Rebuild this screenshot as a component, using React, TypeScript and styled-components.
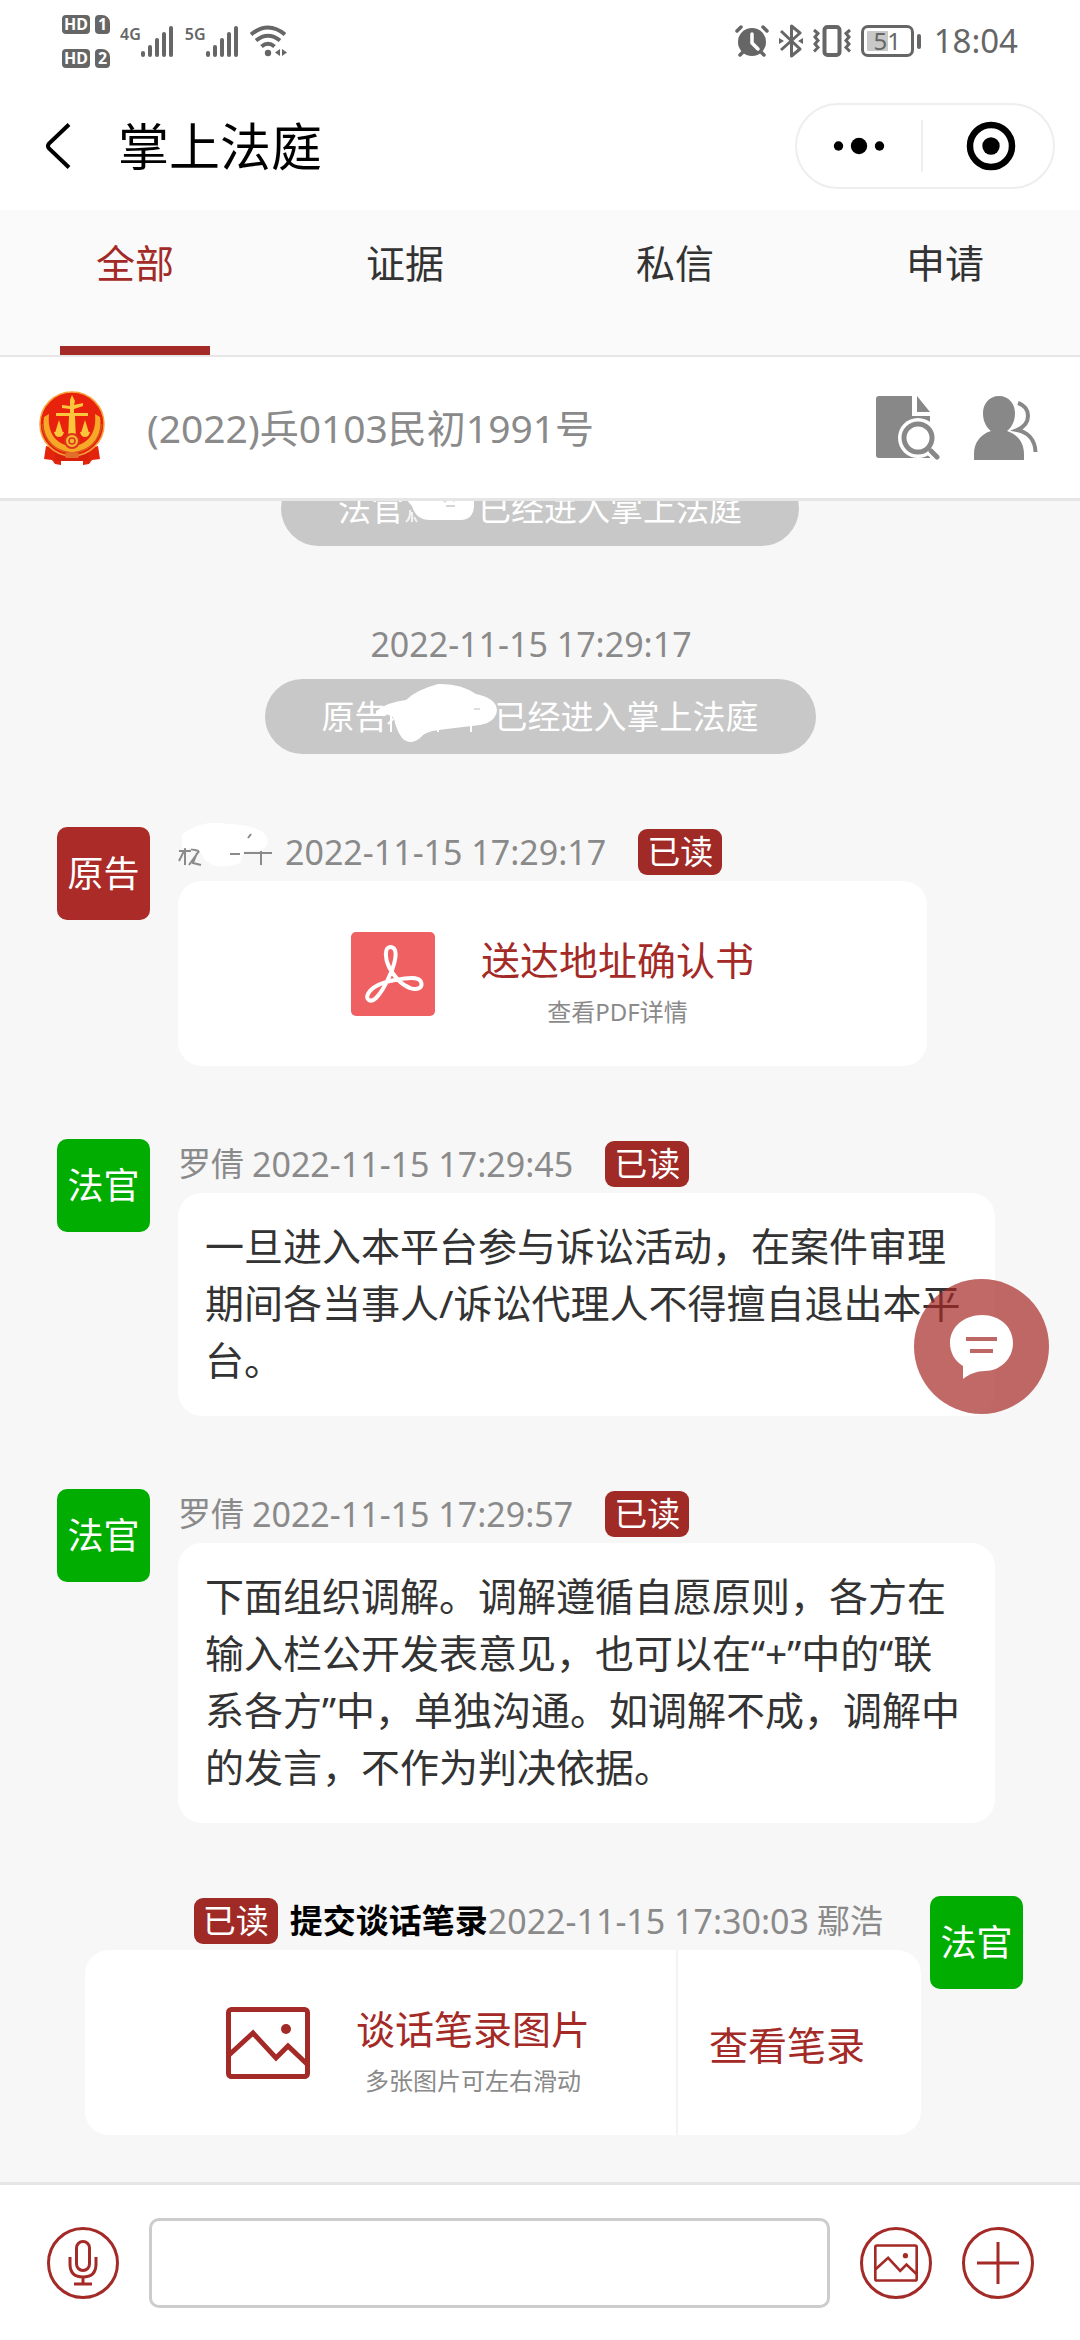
import React from "react";
import styled, { createGlobalStyle } from "styled-components";

const color = {
  red: "#a32a26",
  badge: "#a02b26",
  green: "#00ad00",
  text: "#333333",
  muted: "#8a8a8a",
  page: "#f7f7f7",
  line: "#e6e6e6",
  pill: "#c8c8c8",
  status: "#666666",
};

const GlobalStyle = createGlobalStyle`
  *, *::before, *::after { box-sizing: border-box; }
  body {
    margin: 0;
    background: #ffffff;
    font-family: "Noto Sans", "Noto Sans CJK SC", sans-serif;
    color: ${color.text};
  }
  button { font: inherit; color: inherit; background: none; border: 0; padding: 0; cursor: pointer; }
  svg { display: block; flex: none; }
  h1, h2, p { margin: 0; font-weight: 400; }
`;

const Screen = styled.div`
  display: flex;
  flex-direction: column;
  height: 100vh;
`;

/* Status bar */

const StatusBar = styled.div`
  display: flex;
  justify-content: space-between;
  height: 82px;
  padding: 0 62px;
  color: ${color.status};
`;

const StatusGroup = styled.div`
  display: flex;
  align-items: center;
  gap: 10px;
`;

const SimList = styled.div`
  display: flex;
  flex-direction: column;
  gap: 15px;
`;

const SimRow = styled.div`
  display: flex;
  gap: 5px;
`;

const Chip = styled.span<{ $sim?: boolean }>`
  width: ${(p) => (p.$sim ? 15 : 28)}px;
  height: 19px;
  border-radius: ${(p) => (p.$sim ? "4px 8px 4px 4px" : "4px")};
  background: ${color.status};
  color: #ffffff;
  font-size: 16px;
  font-weight: 700;
  line-height: 19px;
  text-align: center;
`;

const Network = styled.div`
  display: flex;
  align-items: flex-start;
  height: 31px;
  font-size: 16px;
  font-weight: 600;
  line-height: 16px;
`;

const Battery = styled.div`
  display: flex;
  align-items: center;
  gap: 3px;
  margin-right: 3px;

  &::after {
    content: "";
    width: 4px;
    height: 15px;
    border-radius: 2px;
    background: ${color.status};
  }
`;

const BatteryBody = styled.span`
  width: 53px;
  height: 32px;
  border: 3px solid ${color.status};
  border-radius: 7px;
  background: linear-gradient(90deg, #c8c8c8 51%, #ffffff 51%) content-box;
  padding: 3px;
  font-size: 24px;
  line-height: 20px;
  text-align: center;
`;

const Clock = styled.time`
  font-size: 33px;
  line-height: 50px;
`;

/* Title bar */

const TitleBar = styled.header`
  display: flex;
  align-items: center;
  height: 128px;
  padding: 0 25px 0 46px;
  color: #000000;
`;

const Title = styled.h1`
  flex: 1;
  margin-left: 47px;
  font-size: 51px;
  line-height: 72px;
`;

const Capsule = styled.div`
  display: flex;
  width: 260px;
  height: 86px;
  padding: 15px 0;
  border: 2px solid #eeeeee;
  border-radius: 43px;
`;

const CapsuleButton = styled.button`
  flex: 1;
  display: flex;
  align-items: center;
  justify-content: center;

  & + & {
    padding-left: 6px;
    border-left: 2px solid #eeeeee;
  }
`;

/* Tabs */

const Tabs = styled.nav`
  display: grid;
  grid-template-columns: repeat(4, 1fr);
  height: 147px;
  background: #fafafa;
  border-bottom: 2px solid ${color.line};
`;

const Tab = styled.button<{ $active?: boolean }>`
  display: flex;
  flex-direction: column;
  align-items: center;
  justify-content: space-between;
  padding-top: 24px;
  font-size: 39px;
  line-height: 57px;
  color: ${(p) => (p.$active ? color.red : color.text)};

  &::after {
    content: "";
    width: 150px;
    height: 9px;
    background: ${(p) => (p.$active ? color.red : "transparent")};
  }
`;

/* Case row */

const CaseRow = styled.div`
  display: flex;
  align-items: center;
  height: 144px;
  padding: 0 42px 0 37px;
  border-bottom: 3px solid ${color.line};
`;

const CaseNumber = styled.h2`
  flex: 1;
  margin-left: 40px;
  font-size: 39px;
  line-height: 57px;
  color: ${color.muted};
`;

const CaseActions = styled.div`
  display: flex;
  gap: 34px;
`;

/* Conversation */

const Conversation = styled.main`
  flex: 1;
  min-height: 0;
  display: flex;
  flex-direction: column-reverse;
  overflow-y: auto;
  scrollbar-width: none;
  background: ${color.page};
`;

const Feed = styled.div`
  display: flex;
  flex-direction: column;
  gap: 73px;
  padding-bottom: 47px;
`;

const Notice = styled.div`
  display: flex;
  flex-direction: column;
  align-items: center;
  gap: 10px;
`;

const Stamp = styled.time`
  font-size: 34px;
  line-height: 50px;
  color: ${color.muted};

  ${Notice} > & {
    padding-right: 18px;
  }
`;

const Pill = styled.p`
  display: flex;
  align-items: center;
  height: 75px;
  padding: 0 57px;
  border-radius: 38px;
  background: ${color.pill};
  color: #ffffff;
  font-size: 33px;
  line-height: 50px;
`;

const Smudge = styled.span<{ $chars: number }>`
  width: ${(p) => p.$chars * 33 + 8}px;

  svg {
    overflow: visible;
  }
`;

const Message = styled.article<{ $own?: boolean }>`
  display: flex;
  flex-direction: ${(p) => (p.$own ? "row-reverse" : "row")};
  align-items: flex-start;
  gap: ${(p) => (p.$own ? 9 : 28)}px;
  padding: ${(p) => (p.$own ? "0 57px 0 85px" : "0 85px 0 57px")};
`;

const Avatar = styled.div<{ $tone: string }>`
  flex: none;
  width: 93px;
  height: 93px;
  border-radius: 10px;
  background: ${(p) => p.$tone};
  color: #ffffff;
  font-size: 36px;
  line-height: 93px;
  text-align: center;
`;

const MessageBody = styled.div<{ $own?: boolean }>`
  display: flex;
  flex-direction: column;
  align-items: ${(p) => (p.$own ? "flex-end" : "flex-start")};
  gap: 4px;
`;

const Meta = styled.div<{ $own?: boolean }>`
  display: flex;
  align-items: center;
  height: 50px;
  padding-right: ${(p) => (p.$own ? 38 : 0)}px;
  font-size: 33px;
  line-height: 50px;
  color: ${color.muted};
  white-space: nowrap;
`;

const Sender = styled.span<{ $own?: boolean }>`
  margin: ${(p) => (p.$own ? "0 0 0 8px" : "0 8px 0 0")};
`;

const Subject = styled.strong`
  color: #000000;
  font-weight: 700;
`;

const ReadBadge = styled.span<{ $own?: boolean }>`
  width: 84px;
  height: 46px;
  margin: ${(p) => (p.$own ? "0 12px 0 0" : "0 0 0 32px")};
  border-radius: 9px;
  background: ${color.badge};
  color: #ffffff;
  line-height: 46px;
  text-align: center;
`;

const Bubble = styled.p`
  padding: 24px 27px 28px;
  border-radius: 24px;
  background: #ffffff;
  font-size: 39px;
  line-height: 57px;
`;

const Card = styled.div`
  display: flex;
  height: 185px;
  border-radius: 24px;
  background: #ffffff;
`;

const CardButton = styled.button<{ $pad: string }>`
  display: flex;
  align-items: center;
  gap: 46px;
  padding: ${(p) => p.$pad};
  color: ${color.red};
  font-size: 39px;
  white-space: nowrap;

  & + & {
    border-left: 2px solid #f3f3f3;
  }
`;

const CardText = styled.span`
  display: flex;
  flex-direction: column;
  align-items: center;
  padding-bottom: 4px;
`;

const CardTitle = styled.span`
  line-height: 80px;
`;

const CardHint = styled.span`
  font-size: 24px;
  line-height: 24px;
  color: ${color.muted};
`;

/* Floating button and composer */

const ChatButton = styled.button`
  position: fixed;
  right: 31px;
  bottom: 926px;
  display: flex;
  align-items: center;
  justify-content: center;
  width: 135px;
  height: 135px;
  border-radius: 50%;
  background: rgba(165, 42, 37, 0.7);
`;

const Composer = styled.footer`
  display: flex;
  align-items: center;
  gap: 30px;
  height: 158px;
  padding: 0 46px 0 47px;
  border-top: 3px solid ${color.line};
`;

const ComposerInput = styled.input`
  flex: 1;
  min-width: 0;
  height: 90px;
  padding: 0 24px;
  border: 3px solid #cccccc;
  border-radius: 10px;
  background: #ffffff;
  font: inherit;
  font-size: 39px;
  outline: none;
`;

const RoundButton = styled.button`
  flex: none;
  display: flex;
  align-items: center;
  justify-content: center;
  width: 72px;
  height: 72px;
  border: 3px solid ${color.red};
  border-radius: 50%;
`;

/* Drawings */

const SignalBars = () => (
  <svg width="34" height="31" viewBox="0 0 34 31" fill={color.status}>
    <rect x="0" y="25" width="4" height="6" rx="2" />
    <rect x="7" y="19" width="4" height="12" rx="2" />
    <rect x="14" y="12" width="4" height="19" rx="2" />
    <rect x="21" y="6" width="4" height="25" rx="2" />
    <rect x="28" y="0" width="4" height="31" rx="2" />
  </svg>
);

const WifiIcon = () => (
  <svg width="38" height="32" viewBox="0 0 38 32" fill="none" stroke={color.status} strokeWidth="4">
    <path d="M1 9.500Q18 -4.500 35 9.500" />
    <path d="M6 15.500Q18 6 30 15.500" />
    <path d="M11.500 21.500Q18 16 24.500 21.500" />
    <circle cx="18" cy="28" r="3.200" fill={color.status} stroke="none" />
    <path d="M30 24v7l-5-3.500zM32 24v7l5-3.500z" fill={color.status} stroke="none" />
  </svg>
);

const AlarmIcon = () => (
  <svg width="34" height="32" viewBox="0 0 34 32" fill="none" stroke={color.status} strokeWidth="3.500" strokeLinecap="round">
    <circle cx="17" cy="17" r="14" fill={color.status} stroke="none" />
    <path d="M2 6l4-4M32 6l-4-4M5 30l4-4M29 30l-4-4" />
    <path d="M17 9v9l6 6" stroke="#ffffff" />
  </svg>
);

const BluetoothIcon = () => (
  <svg width="24" height="34" viewBox="0 0 24 34" fill="none" stroke={color.status} strokeWidth="3" strokeLinejoin="round">
    <path d="M2 7l19 18-8.500 7V2l8.500 7L2 26" />
    <path d="M0 14l5 3-5 3zM24 14l-5 3 5 3z" fill={color.status} stroke="none" />
  </svg>
);

const VibrateIcon = () => (
  <svg width="38" height="32" viewBox="0 0 38 32" fill="none" stroke={color.status} strokeWidth="3">
    <rect x="11.500" y="2" width="15" height="28" rx="3" strokeWidth="4" />
    <path d="M1 5l4 3.500-3 3.500 3 3.500-3 3.500 3 3.500-4 4M37 5l-4 3.500 3 3.500-3 3.500 3 3.500-3 3.500 4 4" />
  </svg>
);

const BackIcon = () => (
  <svg width="25" height="46" viewBox="0 0 25 46" fill="none" stroke="#000000" strokeWidth="4">
    <path d="M23 1.500L3 20.500Q1 23 3 25.500L23 44.500" />
  </svg>
);

const MoreIcon = () => (
  <svg width="52" height="18" viewBox="0 0 52 18">
    <circle cx="5.500" cy="9" r="4.700" />
    <circle cx="26" cy="9" r="8.200" />
    <circle cx="46.500" cy="9" r="4.700" />
  </svg>
);

const TargetIcon = () => (
  <svg width="50" height="50" viewBox="0 0 50 50">
    <circle cx="25" cy="25" r="21" fill="none" stroke="#000000" strokeWidth="6.500" />
    <circle cx="25" cy="25" r="8.700" />
  </svg>
);

const Emblem = () => (
  <svg width="70" height="76" viewBox="0 0 70 76">
    <path d="M9 56L7 69l8 1 3 4 6 1V60zM61 56l2 13-8 1-3 4-6 1V60z" fill="#e3240c" />
    <path d="M18 62h34v9H18z" fill="#d8200c" />
    <circle cx="35" cy="34" r="32" fill="#e8220c" stroke="#f8a03a" strokeWidth="1.500" />
    <path d="M7 27C4 48 17 63 35 63S66 48 63 27l-5-3C60 44 50 55 35 56 20 55 10 44 12 24z" fill="#f7a827" />
    <path d="M5 34Q9 60 35 63Q61 60 65 34" fill="none" stroke="#d9541a" strokeWidth="1.500" />
    <path d="M35 5l3 6-1 4 9-2v3l-9 3v4h14v3H38l1 24h-8l1-24H19v-3h14v-4l-8-1v-3l8 1v-6z" fill="#fbc63c" />
    <path d="M22 30l4 13h-8zM48 30l4 13h-8z" fill="#fbc63c" />
    <path d="M17 42h10q-1 5-5 5t-5-5zM43 42h10q-1 5-5 5t-5-5z" fill="#fbc63c" />
    <circle cx="35" cy="51" r="7" fill="#f7b733" stroke="#d9361a" strokeWidth="2" />
    <circle cx="35" cy="51" r="3" fill="#f7b733" stroke="#d9361a" strokeWidth="1.500" />
    <path d="M27 64q8-4 16 0l-2 4H29z" fill="#e2702a" />
  </svg>
);

const SearchFileIcon = () => (
  <svg width="64" height="64" viewBox="0 0 64 64">
    <path d="M3 0H36V20H54V62H3Q0 62 0 59V3Q0 0 3 0z" fill="#888888" />
    <path d="M41 0L54 16H41z" fill="#888888" />
    <path d="M50 58L60 66V50z" fill="#ffffff" />
    <circle cx="42" cy="42" r="20" fill="#ffffff" />
    <circle cx="42" cy="42" r="14" fill="none" stroke="#888888" strokeWidth="5" />
    <path d="M55 55L61 61" stroke="#888888" strokeWidth="5" strokeLinecap="round" />
  </svg>
);

const PeopleIcon = () => (
  <svg width="64" height="64" viewBox="0 0 64 64">
    <path d="M25 0C35 0 41 8 41 17C41 25 38 31 33 35C43 38 50 46 50 58V64H0V58C0 46 7 38 17 35C12 31 9 25 9 17C9 8 15 0 25 0z" fill="#888888" />
    <path d="M44 7C57 11 58 28 43 34C53 36 61 43 61.500 56" fill="none" stroke="#888888" strokeWidth="4" />
  </svg>
);

const PdfIcon = () => (
  <svg width="84" height="84" viewBox="0 0 84 84">
    <rect width="84" height="84" rx="5" fill="#ef6063" />
    <path
      d="M40 15C33 14 34 27 38 35C42 43 50 53 59 56C67 59 72 55 70 50C68 44 55 46 44 48C33 50 21 54 17 62C14 68 20 71 25 66C31 60 37 48 41 38C45 27 47 16 40 15z"
      fill="none"
      stroke="#ffffff"
      strokeWidth="4"
      strokeLinejoin="round"
    />
  </svg>
);

const PictureIcon = ({ width, height, stroke }: { width: number; height: number; stroke: number }) => (
  <svg width={width} height={height} viewBox="0 0 84 72" fill="none" stroke={color.red} strokeWidth={stroke}>
    <rect x="2.500" y="2.500" width="79" height="67" rx="3" />
    <path d="M3 48L27 26L50 51L62 39L81 57" />
    <circle cx="60" cy="22" r="5" fill={color.red} stroke="none" />
  </svg>
);

const MicIcon = () => (
  <svg width="30" height="46" viewBox="0 0 30 46" fill="none" stroke={color.red} strokeWidth="3">
    <rect x="8.500" y="1.500" width="13" height="29" rx="6.500" />
    <path d="M2 17V24Q2 37 15 37Q28 37 28 24V17M15 37V44M6 44H24" />
  </svg>
);

const PlusIcon = () => (
  <svg width="42" height="42" viewBox="0 0 42 42" stroke={color.red} strokeWidth="3">
    <path d="M21 0V42M0 21H42" />
  </svg>
);

const SpeechIcon = () => (
  <svg width="66" height="66" viewBox="0 0 66 66">
    <path d="M33 1C51 1 64 13 64 29C64 45 51 57 36 57C28 57 20 60 14 65L14 52C6 47 1 39 1 29C1 13 15 1 33 1z" fill="#ffffff" />
    <path d="M17 25H48M21 37H44" stroke="#bd6864" strokeWidth="4" />
  </svg>
);

const JudgeSmudge = () => (
  <Smudge $chars={2}>
    <svg width="74" height="50" viewBox="0 0 74 50">
      <path d="M2 38q5-4 4-12M8 38V28M13 38l-3-5" fill="none" stroke="#f2f2f2" strokeWidth="2" />
      <path d="M0 -6Q20 -14 48 -6Q70 0 70 18Q71 35 58 36L26 36Q12 36 8 22L1 14z" fill="#ffffff" />
      <path d="M40 18l5-4 6 3M42 22h9" fill="none" stroke="#d5d5d5" strokeWidth="2" />
    </svg>
  </Smudge>
);

const PlaintiffSmudge = () => (
  <Smudge $chars={3}>
    <svg width="107" height="50" viewBox="0 0 107 50">
      <path d="M3 40V24M0 32l6-6M83 24V40M50 36v4" fill="none" stroke="#ffffff" strokeWidth="2" />
      <path d="M-12 19Q0 10 18 8Q28 -2 50 -8Q72 -9 88 2Q108 6 109 18Q108 30 92 33L50 38Q36 40 32 46Q22 54 14 46Q8 38 6 26Q0 20 -12 24z" fill="#ffffff" />
      <path d="M86 17h6" stroke="#dddddd" strokeWidth="2" />
    </svg>
  </Smudge>
);

const SenderSmudge = () => (
  <Smudge $chars={3}>
    <svg width="107" height="50" viewBox="0 0 107 50" fill="none">
      <path d="M1 24h12M7 10V38M6 24l-5 10M13 22l8 2-10 14M19 26l-4 10 8 2" stroke={color.muted} strokeWidth="2" />
      <path d="M66 26h28M83 24V38" stroke={color.muted} strokeWidth="2" />
      <path d="M4 8Q22 -8 50 -3Q76 -2 86 6Q94 16 84 23L66 24L62 36Q40 44 28 34L20 22L4 21z" fill="#ffffff" />
      <path d="M52 27h10M70 11l3-4" stroke={color.muted} strokeWidth="2" />
    </svg>
  </Smudge>
);

/* Page */

const tabs = ["全部", "证据", "私信", "申请"];

const judgeMessages = [
  {
    time: "2022-11-15 17:29:45",
    text: "一旦进入本平台参与诉讼活动，在案件审理期间各当事人/诉讼代理人不得擅自退出本平台。",
  },
  {
    time: "2022-11-15 17:29:57",
    text: "下面组织调解。调解遵循自愿原则，各方在输入栏公开发表意见，也可以在“+”中的“联系各方”中，单独沟通。如调解不成，调解中的发言，不作为判决依据。",
  },
];

export default function App() {
  const [active, setActive] = React.useState(0);

  return (
    <Screen lang="zh-CN">
      <GlobalStyle />
      <StatusBar>
        <StatusGroup>
          <SimList>
            {["1", "2"].map((n) => (
              <SimRow key={n}>
                <Chip>HD</Chip>
                <Chip $sim>{n}</Chip>
              </SimRow>
            ))}
          </SimList>
          <Network>4G<SignalBars /></Network>
          <Network>5G<SignalBars /></Network>
          <WifiIcon />
        </StatusGroup>
        <StatusGroup>
          <AlarmIcon />
          <BluetoothIcon />
          <VibrateIcon />
          <Battery><BatteryBody>51</BatteryBody></Battery>
          <Clock>18:04</Clock>
        </StatusGroup>
      </StatusBar>

      <TitleBar>
        <button aria-label="返回"><BackIcon /></button>
        <Title>掌上法庭</Title>
        <Capsule>
          <CapsuleButton aria-label="更多"><MoreIcon /></CapsuleButton>
          <CapsuleButton aria-label="关闭"><TargetIcon /></CapsuleButton>
        </Capsule>
      </TitleBar>

      <Tabs>
        {tabs.map((label, i) => (
          <Tab key={label} $active={i === active} onClick={() => setActive(i)}>
            {label}
          </Tab>
        ))}
      </Tabs>

      <CaseRow>
        <Emblem />
        <CaseNumber>(2022)兵0103民初1991号</CaseNumber>
        <CaseActions>
          <button aria-label="查看案卷"><SearchFileIcon /></button>
          <button aria-label="参与人"><PeopleIcon /></button>
        </CaseActions>
      </CaseRow>

      <Conversation>
        <Feed>
          <Notice>
            <Pill>法官<JudgeSmudge />已经进入掌上法庭</Pill>
          </Notice>
          <Notice>
            <Stamp>2022-11-15 17:29:17</Stamp>
            <Pill>原告<PlaintiffSmudge />已经进入掌上法庭</Pill>
          </Notice>

          <Message>
            <Avatar $tone="#ab2b28">原告</Avatar>
            <MessageBody>
              <Meta>
                <SenderSmudge />
                <Stamp>2022-11-15 17:29:17</Stamp>
                <ReadBadge>已读</ReadBadge>
              </Meta>
              <Card>
                <CardButton $pad="0 173px">
                  <PdfIcon />
                  <CardText>
                    <CardTitle>送达地址确认书</CardTitle>
                    <CardHint>查看PDF详情</CardHint>
                  </CardText>
                </CardButton>
              </Card>
            </MessageBody>
          </Message>

          {judgeMessages.map((m) => (
            <Message key={m.time}>
              <Avatar $tone={color.green}>法官</Avatar>
              <MessageBody>
                <Meta>
                  <Sender>罗倩</Sender>
                  <Stamp>{m.time}</Stamp>
                  <ReadBadge>已读</ReadBadge>
                </Meta>
                <Bubble>{m.text}</Bubble>
              </MessageBody>
            </Message>
          ))}

          <Message $own>
            <Avatar $tone={color.green}>法官</Avatar>
            <MessageBody $own>
              <Meta $own>
                <ReadBadge $own>已读</ReadBadge>
                <Subject>提交谈话笔录</Subject>
                <Stamp>2022-11-15 17:30:03</Stamp>
                <Sender $own>鄢浩</Sender>
              </Meta>
              <Card>
                <CardButton $pad="0 86px 0 141px">
                  <PictureIcon width={84} height={72} stroke={5} />
                  <CardText>
                    <CardTitle>谈话笔录图片</CardTitle>
                    <CardHint>多张图片可左右滑动</CardHint>
                  </CardText>
                </CardButton>
                <CardButton $pad="0 56px 0 31px">查看笔录</CardButton>
              </Card>
            </MessageBody>
          </Message>
        </Feed>
      </Conversation>

      <ChatButton aria-label="消息"><SpeechIcon /></ChatButton>

      <Composer>
        <RoundButton aria-label="语音"><MicIcon /></RoundButton>
        <ComposerInput type="text" aria-label="输入消息" />
        <RoundButton aria-label="图片"><PictureIcon width={44} height={38} stroke={5} /></RoundButton>
        <RoundButton aria-label="添加"><PlusIcon /></RoundButton>
      </Composer>
    </Screen>
  );
}
